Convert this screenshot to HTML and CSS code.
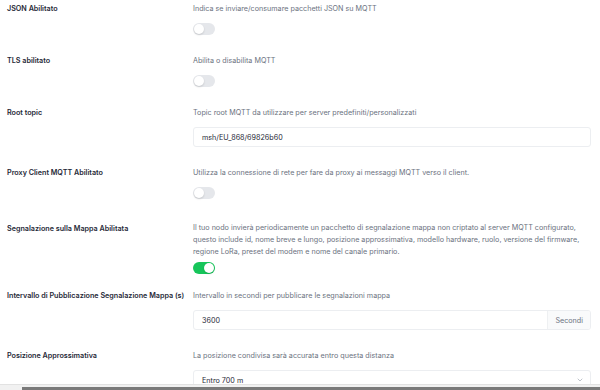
FILE: index.html
```html
<!DOCTYPE html>
<html lang="it">
<head>
    <meta charset="UTF-8">
    <title>MQTT - Impostazioni</title>
    <link rel="stylesheet" href="styles.css">
</head>
<body>
    <div class="settings">
        <div class="row">
            <div class="label">JSON Abilitato</div>
            <div class="field">
                <p class="desc">Indica se inviare/consumare pacchetti JSON su MQTT</p>
                <span class="toggle"></span>
            </div>
        </div>
        <div class="row">
            <div class="label">TLS abilitato</div>
            <div class="field">
                <p class="desc">Abilita o disabilita MQTT</p>
                <span class="toggle"></span>
            </div>
        </div>
        <div class="row">
            <div class="label">Root topic</div>
            <div class="field">
                <p class="desc">Topic root MQTT da utilizzare per server predefiniti/personalizzati</p>
                <div class="input"><span class="value">msh/EU_868/69826b60</span></div>
            </div>
        </div>
        <div class="row">
            <div class="label">Proxy Client MQTT Abilitato</div>
            <div class="field">
                <p class="desc">Utilizza la connessione di rete per fare da proxy ai messaggi MQTT verso il client.</p>
                <span class="toggle"></span>
            </div>
        </div>
        <div class="row row-long">
            <div class="label">Segnalazione sulla Mappa Abilitata</div>
            <div class="field">
                <p class="desc long">Il tuo nodo invierà periodicamente un pacchetto di segnalazione mappa non criptato al server MQTT configurato, questo include id, nome breve e lungo, posizione approssimativa, modello hardware, ruolo, versione del firmware, regione LoRa, preset del modem e nome del canale primario.</p>
                <span class="toggle on"></span>
            </div>
        </div>
        <div class="row">
            <div class="label">Intervallo di Pubblicazione Segnalazione Mappa (s)</div>
            <div class="field">
                <p class="desc">Intervallo in secondi per pubblicare le segnalazioni mappa</p>
                <div class="input"><span class="value">3600</span><span class="addon">Secondi</span></div>
            </div>
        </div>
        <div class="row">
            <div class="label">Posizione Approssimativa</div>
            <div class="field">
                <p class="desc">La posizione condivisa sarà accurata entro questa distanza</p>
                <div class="input select">
                    <span class="value">Entro 700 m</span>
                    <svg class="chevron" width="8" height="8" viewBox="0 0 24 24" fill="none" stroke="#9ca3af" stroke-width="2" stroke-linecap="round" stroke-linejoin="round"><path d="m6 9 6 6 6-6"/></svg>
                </div>
            </div>
        </div>
    </div>
    <div class="hscroll"><div class="hscroll-thumb"></div></div>
</body>
</html>
```

FILE: styles.css
```css
body, html { margin: 0; padding: 0; background: #fff; font-family: Inter, "Noto Sans", sans-serif; font-size: 7.2px; color: #1f2937; }
.settings { padding: 2px 9px 0 7px; }
.row { display: grid; grid-template-columns: 186px 1fr; padding: 0 0 19px; }
.row-long { padding: 4px 0 15px; }
.label { font-weight: 600; line-height: 13px; color: #1f2937; }
.field { display: flex; flex-direction: column; align-items: flex-start; gap: 8px; }
.desc { margin: 0; line-height: 13px; color: #6b7280; }
.desc.long { line-height: 12px; margin-bottom: -4px; }
.toggle { position: relative; width: 22px; height: 12px; border-radius: 6px; background: #e5e7eb; }
.toggle::after { content: ""; position: absolute; left: 1px; top: 1px; width: 10px; height: 10px; border-radius: 50%; background: #fff; box-shadow: 0 1px 2px rgba(0,0,0,0.15); }
.toggle.on { background: #16c55a; }
.toggle.on::after { left: 11px; }
.input { align-self: stretch; display: flex; align-items: center; height: 20px; border: 1px solid #eceef1; border-radius: 3px; box-sizing: border-box; overflow: hidden; }
.input .value { flex: 1; padding-left: 8px; color: #1f2937; }
.addon { align-self: stretch; display: flex; align-items: center; padding: 0 7px; background: #f9fafb; border-left: 1px solid #eef0f2; color: #6b7280; }
.select .chevron { margin-right: 6px; }
.hscroll { position: fixed; left: 0; right: 0; bottom: 0; height: 5px; background: #f1f1f1; border-top: 1px solid #e2e2e2; }
.hscroll-thumb { position: absolute; left: 22px; right: 0; bottom: 0; height: 3px; background: #7a7a7a; }
```
